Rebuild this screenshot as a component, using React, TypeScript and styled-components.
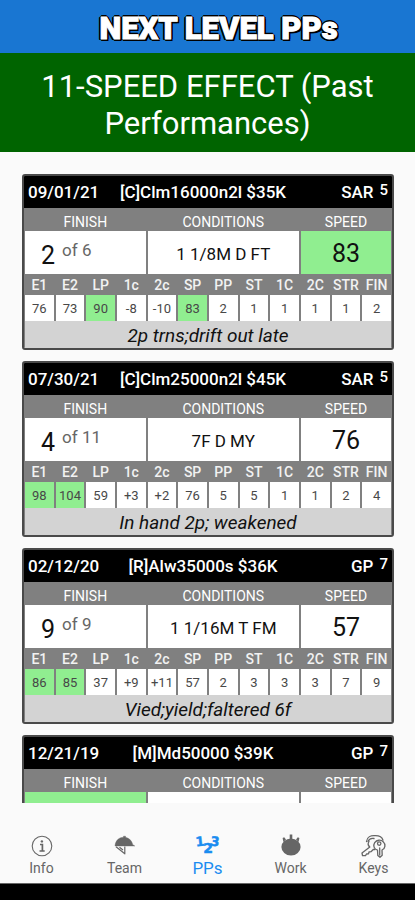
import React from "react";
import styled, { createGlobalStyle } from "styled-components";

const Global = createGlobalStyle`
  * { box-sizing: border-box; }
  body { margin: 0; background: #fafafa; font-family: Roboto, "Liberation Sans", sans-serif; }
`;

const Screen = styled.div`
  height: 100vh;
  display: flex;
  flex-direction: column;
  background: #fafafa;
`;

const Brand = styled.header`
  flex: none;
  padding: 11px 0 6px 22px;
  background: #1976d2;
  color: #fff;
  font-size: 31px;
  line-height: 36px;
  font-weight: 900;
  text-align: center;
  -webkit-text-stroke: 1px #fff;
  text-shadow: 2px 0 #000, -2px 0 #000, 0 2px #000, 0 -2px #000,
    1px 1px #000, -1px 1px #000, 1px -1px #000, -1px -1px #000,
    2px 2px #000, -2px 1px #000;
`;

const Title = styled.h1`
  flex: none;
  margin: 0;
  padding: 15px 24px 10px;
  background: #006400;
  color: #fff;
  font-size: 31px;
  line-height: 37px;
  font-weight: 400;
  text-align: center;
`;

const RaceList = styled.main`
  flex: 1;
  min-height: 0;
  overflow-y: auto;
  scrollbar-width: none;
  display: flex;
  flex-direction: column;
  gap: 11px;
  padding: 22px 21px 0 22px;
`;

const Card = styled.article`
  flex: none;
  border: 2px solid #4a4a4a;
  border-radius: 3px;
  background: #808080;
  overflow: hidden;
`;

const CardHead = styled.header`
  display: grid;
  grid-template-columns: 74px 1fr 84px;
  height: 32px;
  padding: 0 4px;
  background: #000;
  color: #fff;
  font-size: 17px;
  line-height: 33px;
  font-weight: 500;
  text-align: center;
  white-space: nowrap;
`;

const RaceDate = styled.time`
  text-align: left;
`;

const Track = styled.span`
  display: flex;
  justify-content: flex-end;
  gap: 6px;
`;

const RaceNumber = styled.span`
  font-size: 15px;
  line-height: 29px;
`;

const Grid = styled.table`
  width: 100%;
  table-layout: fixed;
  border-collapse: separate;
  border-spacing: 0;
  text-align: center;
`;

const SectionLabel = styled.th`
  height: 23px;
  padding: 6px 0 0;
  color: #fff;
  font-size: 14px;
  line-height: 17px;
  font-weight: 400;
`;

const Cell = styled.td<{ $best?: boolean }>`
  padding: 0;
  border: solid #808080;
  border-width: 0 1px;
  background: ${(p) => (p.$best ? "#90ee90" : "#fff")};
`;

const SummaryCell = styled(Cell)`
  height: 43px;
  padding-top: 3px;
  color: #111;
  font-size: 17px;
  line-height: 40px;
`;

const SpeedCell = styled(SummaryCell)`
  font-size: 25px;
`;

const Finish = styled.div`
  display: flex;
  height: 40px;
  padding-left: 16px;
  font-size: 25px;
  line-height: 43px;
`;

const FieldSize = styled.span`
  margin-left: 7px;
  color: #666;
  font-size: 17px;
  line-height: 32px;
`;

const StatLabel = styled.th`
  height: 21px;
  padding: 2px 0 0;
  color: #f2f2f2;
  font-size: 14px;
  line-height: 19px;
  font-weight: 500;
`;

const StatCell = styled(Cell)`
  height: 26px;
  padding-top: 1px;
  color: #484848;
  font-size: 13px;
  line-height: 25px;
`;

const Comment = styled.td`
  height: 27px;
  padding: 2px 0 0;
  border: solid #808080;
  border-width: 0 1px;
  background: #d3d3d3;
  color: #111;
  font-size: 19px;
  line-height: 25px;
  font-style: italic;
`;

const TabBar = styled.nav`
  flex: none;
  display: grid;
  grid-template-columns: repeat(5, 1fr);
  margin-top: 27px;
  height: 54px;
  border-bottom: 1px solid #666;
`;

const Tab = styled.button<{ $active?: boolean }>`
  display: flex;
  flex-direction: column;
  align-items: center;
  padding: 3px 0 0;
  border: 0;
  background: none;
  color: ${(p) => (p.$active ? "#1a8cf0" : "#666")};
  font-family: inherit;
  font-size: ${(p) => (p.$active ? "17px" : "14px")};
  line-height: 18px;
  cursor: pointer;

  svg { display: block; width: 26px; height: 26px; }
`;

const SystemBar = styled.div`
  flex: none;
  height: 16px;
  background: #000;
`;

type Race = {
  date: string;
  title: string;
  track: string;
  number: number;
  finish?: string;
  field?: number;
  conditions?: string;
  speed?: number;
  stats?: string[];
  best?: string[];
  comment?: string;
};

const LABELS = ["E1", "E2", "LP", "1c", "2c", "SP", "PP", "ST", "1C", "2C", "STR", "FIN"];

const RACES: Race[] = [
  {
    date: "09/01/21", title: "[C]Clm16000n2l $35K", track: "SAR", number: 5,
    finish: "2", field: 6, conditions: "1 1/8M D FT", speed: 83,
    stats: ["76", "73", "90", "-8", "-10", "83", "2", "1", "1", "1", "1", "2"],
    best: ["speed", "LP", "SP"], comment: "2p trns;drift out late",
  },
  {
    date: "07/30/21", title: "[C]Clm25000n2l $45K", track: "SAR", number: 5,
    finish: "4", field: 11, conditions: "7F D MY", speed: 76,
    stats: ["98", "104", "59", "+3", "+2", "76", "5", "5", "1", "1", "2", "4"],
    best: ["E1", "E2"], comment: "In hand 2p; weakened",
  },
  {
    date: "02/12/20", title: "[R]Alw35000s $36K", track: "GP", number: 7,
    finish: "9", field: 9, conditions: "1 1/16M T FM", speed: 57,
    stats: ["86", "85", "37", "+9", "+11", "57", "2", "3", "3", "3", "7", "9"],
    best: ["E1", "E2"], comment: "Vied;yield;faltered 6f",
  },
  { date: "12/21/19", title: "[M]Md50000 $39K", track: "GP", number: 7, best: ["finish"] },
];

function RaceCard({ race }: { race: Race }) {
  const isBest = (key: string) => !!race.best?.includes(key);
  return (
    <Card>
      <CardHead>
        <RaceDate>{race.date}</RaceDate>
        <span>{race.title}</span>
        <Track>
          {race.track}
          <RaceNumber>{race.number}</RaceNumber>
        </Track>
      </CardHead>
      <Grid>
        <colgroup>{LABELS.map((l) => <col key={l} />)}</colgroup>
        <tbody>
          <tr>
            <SectionLabel colSpan={4}>FINISH</SectionLabel>
            <SectionLabel colSpan={5}>CONDITIONS</SectionLabel>
            <SectionLabel colSpan={3}>SPEED</SectionLabel>
          </tr>
          <tr>
            <SummaryCell colSpan={4} $best={isBest("finish")}>
              {race.finish && (
                <Finish>
                  {race.finish}
                  <FieldSize>of {race.field}</FieldSize>
                </Finish>
              )}
            </SummaryCell>
            <SummaryCell colSpan={5}>{race.conditions}</SummaryCell>
            <SpeedCell colSpan={3} $best={isBest("speed")}>{race.speed}</SpeedCell>
          </tr>
          {race.stats && (
            <>
              <tr>{LABELS.map((l) => <StatLabel key={l}>{l}</StatLabel>)}</tr>
              <tr>
                {race.stats.map((s, i) => (
                  <StatCell key={LABELS[i]} $best={isBest(LABELS[i])}>{s}</StatCell>
                ))}
              </tr>
              <tr><Comment colSpan={12}>{race.comment}</Comment></tr>
            </>
          )}
        </tbody>
      </Grid>
    </Card>
  );
}

const InfoIcon = () => (
  <svg viewBox="0 0 26 26" fill="none" stroke="currentColor">
    <circle cx="13" cy="13" r="9.8" strokeWidth="1.1" />
    <path d="M11 11.5h2.4v6.5M10.5 18h5.2" strokeWidth="1.7" />
    <circle cx="12.9" cy="8.4" r="1.2" fill="currentColor" stroke="none" />
  </svg>
);

const CapIcon = () => (
  <svg viewBox="0 0 26 26" fill="none" stroke="currentColor" strokeLinejoin="round">
    <path d="M3 13C3.500 7 7.500 4.300 11.500 4.300V3.200h2v1.100c3.800.8 6.400 3.500 7.300 7.400l2 1.300H3z" fill="currentColor" strokeWidth=".4" />
    <path d="M4 13.800l8.800 7V13.500M7.500 14.200l3.500 2.800" strokeWidth="1.200" />
  </svg>
);

const NumbersIcon = () => (
  <svg viewBox="0 0 26 26" fill="currentColor" stroke="currentColor" strokeWidth=".5" fontFamily="DejaVu Sans" fontWeight="700" textAnchor="middle">
    <text x="5" y="13" fontSize="13" transform="rotate(-6 5 9)">1</text>
    <text x="13" y="20" fontSize="14">2</text>
    <text x="20" y="13" fontSize="13" transform="rotate(6 20 9)">3</text>
  </svg>
);

const StopwatchIcon = () => (
  <svg viewBox="0 0 26 26" fill="currentColor">
    <ellipse cx="13" cy="14" rx="9.600" ry="8.600" />
    <path d="M11.700 1.500h2.600v5h-2.600zM4.600 5l1.600-.8 1.800 2.400-2.600 2.400zM21.400 5l-1.600-.8-1.800 2.400 2.600 2.400z" />
  </svg>
);

const KeysIcon = () => (
  <svg viewBox="0 0 26 26" fill="none" stroke="currentColor" strokeWidth="1.300" strokeLinecap="round" strokeLinejoin="round">
    <path d="M5.500 8.500C6 4 10 2.500 13.500 2.700c4-.2 7.500 1 8.500 4.500" />
    <path d="M7 8.500c1-2.500 3.500-3.500 6-3" />
    <path d="M8 8.500c-1.300 2-.8 4.200.8 5.500L1 20l.5 2.500 3 .2 1-1.700 2-.2.500-1.800 2-.3 2.500-2.400 1.500.2" />
    <path d="M16.500 17.200c-3.500-1-4.700-4.700-2.800-7.600 2-2.800 6-3.200 8.500-.8 2.700 2.600 2.200 6.800-1.200 8.200l.2 5.300-2.200 2-2.200-1.800z" />
    <circle cx="18.200" cy="10.600" r="1.700" />
    <path d="M18.700 15v7" />
  </svg>
);

const TABS = [
  { label: "Info", Icon: InfoIcon },
  { label: "Team", Icon: CapIcon },
  { label: "PPs", Icon: NumbersIcon },
  { label: "Work", Icon: StopwatchIcon },
  { label: "Keys", Icon: KeysIcon },
];

export default function App() {
  const [active, setActive] = React.useState("PPs");
  return (
    <Screen>
      <Global />
      <Brand>NEXT LEVEL PPs</Brand>
      <Title>11-SPEED EFFECT (Past Performances)</Title>
      <RaceList>
        {RACES.map((race) => <RaceCard key={race.date} race={race} />)}
      </RaceList>
      <TabBar>
        {TABS.map(({ label, Icon }) => (
          <Tab key={label} type="button" $active={active === label} onClick={() => setActive(label)}>
            <Icon />
            {label}
          </Tab>
        ))}
      </TabBar>
      <SystemBar />
    </Screen>
  );
}
